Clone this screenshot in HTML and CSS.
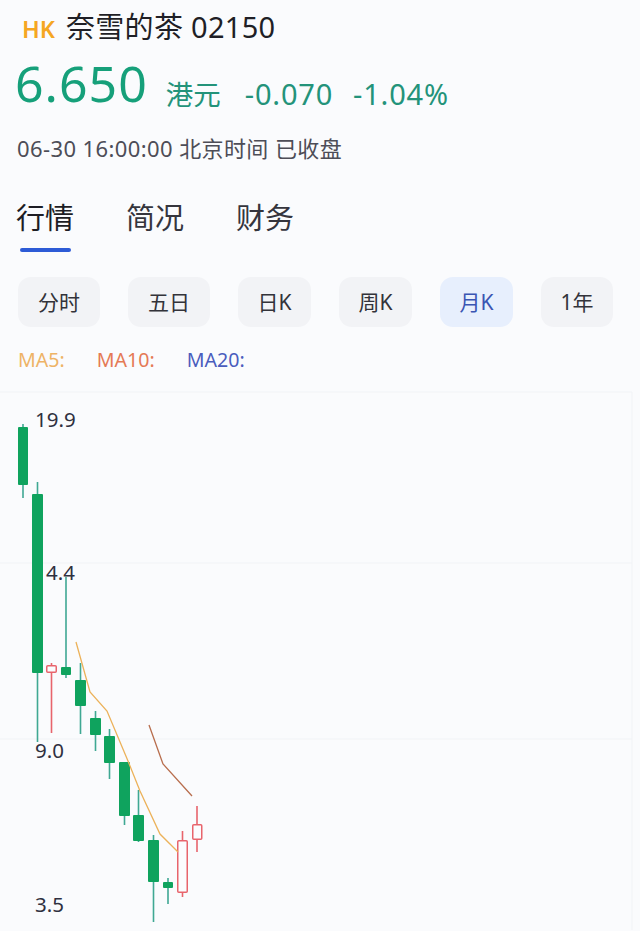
FILE: index.html
```html
<!DOCTYPE html>
<html lang="zh-CN">
<head>
<meta charset="utf-8">
<title>奈雪的茶 02150</title>
<link rel="stylesheet" href="styles.css">
</head>
<body>
<div class="page">
  <div class="title"><span class="mkt">HK</span><span class="name">奈雪的茶 02150</span></div>
  <div class="quote"><span class="price">6.650</span><span class="cur">港元</span><span class="chg">-0.070</span><span class="pct">-1.04%</span></div>
  <div class="time">06-30 16:00:00 北京时间 已收盘</div>
  <div class="tabs">
    <div class="tab active">行情</div>
    <div class="tab">简况</div>
    <div class="tab">财务</div>
  </div>
  <div class="periods">
    <div class="period">分时</div>
    <div class="period">五日</div>
    <div class="period">日K</div>
    <div class="period">周K</div>
    <div class="period active">月K</div>
    <div class="period">1年</div>
  </div>
  <div class="ma">
    <span class="ma5">MA5:</span>
    <span class="ma10">MA10:</span>
    <span class="ma20">MA20:</span>
  </div>
  <svg class="chart" viewBox="0 380 640 551" width="640" height="551" xmlns="http://www.w3.org/2000/svg">
    <g class="grid">
      <line x1="0" y1="393" x2="632" y2="393"/>
      <line x1="0" y1="564" x2="632" y2="564"/>
      <line x1="0" y1="740" x2="632" y2="740"/>
      <line x1="632" y1="393" x2="632" y2="931"/>
    </g>
    <g class="wick-g">
      <line x1="23" y1="425" x2="23" y2="499"/>
      <line x1="37.5" y1="483" x2="37.5" y2="743"/>
      <line x1="66" y1="578" x2="66" y2="679"/>
      <line x1="80.5" y1="664" x2="80.5" y2="735"/>
      <line x1="95.5" y1="712" x2="95.5" y2="752"/>
      <line x1="109.5" y1="730" x2="109.5" y2="780"/>
      <line x1="124.5" y1="763" x2="124.5" y2="826"/>
      <line x1="138.5" y1="791" x2="138.5" y2="843"/>
      <line x1="153.5" y1="836" x2="153.5" y2="923"/>
      <line x1="168" y1="879" x2="168" y2="905"/>
    </g>
    <g class="body-g">
      <rect x="18" y="428" width="10" height="58" rx="1"/>
      <rect x="32" y="495" width="11" height="179" rx="1"/>
      <rect x="61" y="668" width="10" height="8" rx="1"/>
      <rect x="75" y="681" width="11" height="26" rx="1"/>
      <rect x="90" y="719" width="11" height="17" rx="1"/>
      <rect x="104" y="737" width="11" height="27" rx="1"/>
      <rect x="119" y="763" width="11" height="54" rx="1"/>
      <rect x="133" y="816" width="11" height="26" rx="1"/>
      <rect x="148" y="841" width="11" height="42" rx="1"/>
      <rect x="163" y="883" width="10" height="6" rx="1"/>
    </g>
    <g class="wick-r">
      <line x1="51.5" y1="664" x2="51.5" y2="666"/>
      <line x1="51.5" y1="674" x2="51.5" y2="734"/>
      <line x1="182.5" y1="832" x2="182.5" y2="841"/>
      <line x1="182.5" y1="894" x2="182.5" y2="898"/>
      <line x1="197" y1="807" x2="197" y2="825"/>
      <line x1="197" y1="841" x2="197" y2="853"/>
    </g>
    <g class="body-r">
      <rect x="46.75" y="666.75" width="9.5" height="6.5" rx="1"/>
      <rect x="177.75" y="841.75" width="9.5" height="51.5" rx="1"/>
      <rect x="192.75" y="825.75" width="9" height="14.5" rx="1"/>
    </g>
    <polyline class="l-ma5" points="76,643 90,693 107,712 128,762 140,792 160,835 178,853"/>
    <polyline class="l-ma10" points="149,726 163,765 192,797"/>
    <g class="axis">
      <text x="35" y="428">19.9</text>
      <text x="46" y="581">4.4</text>
      <text x="35" y="759">9.0</text>
      <text x="35" y="913">3.5</text>
    </g>
  </svg>
</div>
</body>
</html>
```

FILE: styles.css
```css
html, body {
  margin: 0;
  padding: 0;
  background: #fafbfd;
}
.page {
  width: 640px;
  height: 931px;
  overflow: hidden;
  font-family: "Noto Sans", "Noto Sans CJK SC", sans-serif;
  color: #222;
}
.title {
  display: flex;
  align-items: baseline;
  height: 40px;
  line-height: 40px;
  padding: 7px 0 0 22px;
}
.mkt {
  font-size: 23.5px;
  font-weight: 600;
  color: #f5a623;
}
.name {
  font-size: 29px;
  margin-left: 11px;
  color: #1f1f26;
  letter-spacing: 0.3px;
}
.quote {
  margin-top: 8px;
  height: 56px;
  line-height: 56px;
  padding-left: 15px;
  white-space: nowrap;
}
.price {
  font-size: 50px;
  letter-spacing: 1px;
  color: #16a07a;
}
.cur, .chg, .pct {
  color: #23937a;
  vertical-align: -3px;
}
.cur { margin-left: 18px; font-size: 27.5px; }
.chg { margin-left: 24px; font-size: 29px; letter-spacing: 0.8px; }
.pct { margin-left: 20px; font-size: 29px; letter-spacing: 0.8px; }
.time {
  margin-top: 22px;
  height: 30px;
  line-height: 30px;
  padding-left: 17px;
  font-size: 22px;
  color: #4d4d57;
  letter-spacing: 0.4px;
}
.tabs {
  display: flex;
  gap: 52px;
  margin-top: 35px;
  padding-left: 16px;
}
.tab {
  font-size: 29px;
  line-height: 40px;
  color: #35353d;
  display: flex;
  flex-direction: column;
  align-items: center;
}
.tab.active { color: #1d1d24; }
.tab.active::after {
  content: "";
  display: block;
  width: 51px;
  height: 4px;
  margin-top: 10px;
  border-radius: 2px;
  background: #2d5bd6;
}
.periods {
  display: flex;
  gap: 28px;
  margin-top: 25px;
  padding-left: 18px;
}
.period {
  height: 50px;
  line-height: 50px;
  padding: 0 20px;
  border-radius: 13px;
  background: #f2f3f6;
  font-size: 21px;
  color: #33333a;
}
.period:nth-child(n+3) {
  padding: 0 19.5px;
}
.period.active {
  background: #e7effd;
  color: #3a55b3;
}
.ma {
  display: flex;
  gap: 32px;
  margin-top: 21px;
  height: 24px;
  line-height: 24px;
  padding-left: 18px;
  font-size: 19.6px;
}
.ma5 { color: #eeb366; }
.ma10 { color: #e57a55; }
.ma20 { color: #4a5dbd; }
.chart {
  display: block;
  margin-top: 7px;
}
.grid line {
  stroke: #f1f3f6;
  stroke-width: 1;
}
.wick-g line {
  stroke: #3fa893;
  stroke-width: 1.6;
}
.body-g rect {
  fill: #0fa35e;
}
.wick-r line {
  stroke: #e8646c;
  stroke-width: 1.6;
}
.body-r rect {
  fill: #fbfcfe;
  stroke: #e8646c;
  stroke-width: 1.5;
}
.l-ma5 {
  fill: none;
  stroke: #ecb25a;
  stroke-width: 1.3;
}
.l-ma10 {
  fill: none;
  stroke: #b86e4e;
  stroke-width: 1.3;
}
.axis text {
  font-family: "Noto Sans", sans-serif;
  font-size: 20.5px;
  fill: #2f3040;
}
```
